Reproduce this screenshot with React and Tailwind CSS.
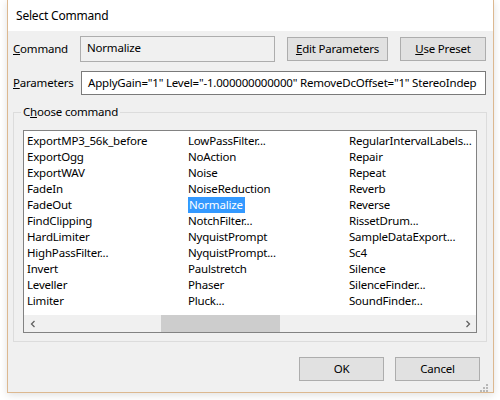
import React from 'react';

const columns = [
    ['ExportMP3_56k_before', 'ExportOgg', 'ExportWAV', 'FadeIn', 'FadeOut', 'FindClipping', 'HardLimiter', 'HighPassFilter...', 'Invert', 'Leveller', 'Limiter'],
    ['LowPassFilter...', 'NoAction', 'Noise', 'NoiseReduction', 'Normalize', 'NotchFilter...', 'NyquistPrompt', 'NyquistPrompt...', 'Paulstretch', 'Phaser', 'Pluck...'],
    ['RegularIntervalLabels...', 'Repair', 'Repeat', 'Reverb', 'Reverse', 'RissetDrum...', 'SampleDataExport...', 'Sc4', 'Silence', 'SilenceFinder...', 'SoundFinder...'],
];

const Button = ({ children, className = '' }) => (
    <div className={`h-[24px] flex items-center justify-center bg-[#e1e1e1] border border-[#adadad] ${className}`}>
        {children}
    </div>
);

const App = () => {
    return (
        <div
            className="w-[500px] h-[400px] bg-white text-[11.5px] tracking-[-0.2px] text-black overflow-hidden"
            style={{ fontFamily: '"Noto Sans", "Open Sans", sans-serif' }}
        >
            <div className="ml-[7px] w-[487px] h-[393px] flex flex-col border-l border-r border-b border-[#dcb890] shadow-[0_2px_8px_rgba(0,0,0,0.12)]">
                {/* title bar */}
                <div className="h-[31px] bg-white flex items-center pl-[8px] text-[12px]">
                    Select Command
                </div>

                <div className="flex-1 bg-[#f0f0f0] flex flex-col px-[5px]">
                    {/* command row */}
                    <div className="mt-[5px] h-[26px] flex items-center">
                        <div className="w-[67px]"><span className="underline">C</span>ommand</div>
                        <div className="w-[195px] h-[26px] border border-[#adadad] bg-[#f0f0f0] flex items-center pl-[6px] pb-[2px]">
                            Normalize
                        </div>
                        <Button className="ml-[12px] w-[101px]"><span className="underline">E</span>dit Parameters</Button>
                        <Button className="ml-[12px] w-[86px]"><span className="underline">U</span>se Preset</Button>
                    </div>

                    {/* parameters row */}
                    <div className="mt-[9px] h-[24px] flex items-center">
                        <div className="w-[68px]"><span className="underline">P</span>arameters</div>
                        <div className="w-[405px] h-[24px] border border-[#7a7a7a] bg-white flex items-center pl-[6px] overflow-hidden whitespace-nowrap">
                            ApplyGain="1" Level="-1.000000000000" RemoveDcOffset="1" StereoIndep
                        </div>
                    </div>

                    {/* group box */}
                    <div className="relative mt-[17px] w-[474px] h-[230px] border border-[#dcdcdc] px-[9px] pt-[17px] pb-[8px]">
                        <div className="absolute left-[7px] top-[-9px] px-[2px] bg-[#f0f0f0] leading-[16px]">
                            C<span className="underline">h</span>oose command
                        </div>
                        <div className="h-full border border-[#828282] bg-white flex flex-col">
                            <div className="flex-1 flex pt-[2px] pl-[3px] overflow-hidden">
                                {columns.map((col, ci) => (
                                    <div key={ci} className="w-[161px] shrink-0 flex flex-col">
                                        {col.map(item => (
                                            <div key={item} className="h-[16px] leading-[16px] whitespace-nowrap">
                                                {item === 'Normalize' ? (
                                                    <span className="bg-[#3399ff] text-white pl-[1px] pr-[2px] inline-block h-[16px]">{item}</span>
                                                ) : item}
                                            </div>
                                        ))}
                                    </div>
                                ))}
                            </div>
                            {/* horizontal scrollbar */}
                            <div className="h-[17px] bg-[#f0f0f0] flex items-center">
                                <div className="w-[17px] h-[17px] flex items-center justify-center">
                                    <svg width="8" height="8" viewBox="0 0 8 8"><path d="M5.5 1 L2.5 4 L5.5 7" fill="none" stroke="#606060" strokeWidth="1.3" /></svg>
                                </div>
                                <div className="flex-1 h-[17px] flex">
                                    <div className="ml-[120px] w-[119px] h-[17px] bg-[#cdcdcd]" />
                                </div>
                                <div className="w-[17px] h-[17px] flex items-center justify-center">
                                    <svg width="8" height="8" viewBox="0 0 8 8"><path d="M2.5 1 L5.5 4 L2.5 7" fill="none" stroke="#606060" strokeWidth="1.3" /></svg>
                                </div>
                            </div>
                        </div>
                    </div>

                    {/* bottom buttons */}
                    <div className="mt-[15px] flex justify-end pr-[8px]">
                        <Button className="w-[85px]">OK</Button>
                        <Button className="ml-[11px] w-[85px]">Cancel</Button>
                    </div>

                    <div className="flex justify-end mt-[3px]">
                        <svg width="8" height="8" viewBox="0 0 8 8">
                            <rect x="6" y="0" width="2" height="2" fill="#b8b8b8" />
                            <rect x="3" y="3" width="2" height="2" fill="#b8b8b8" />
                            <rect x="6" y="3" width="2" height="2" fill="#b8b8b8" />
                            <rect x="0" y="6" width="2" height="2" fill="#b8b8b8" />
                            <rect x="3" y="6" width="2" height="2" fill="#b8b8b8" />
                            <rect x="6" y="6" width="2" height="2" fill="#b8b8b8" />
                        </svg>
                    </div>
                </div>
            </div>
        </div>
    );
};

export default App;
